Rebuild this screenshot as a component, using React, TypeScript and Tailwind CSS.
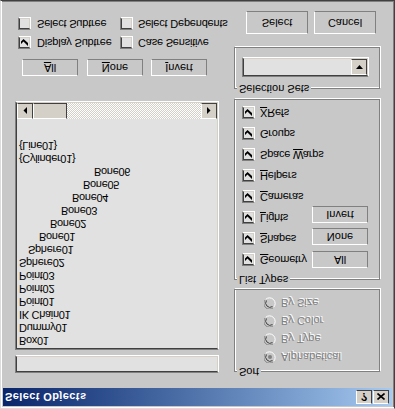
import React from "react";

const font = "font-['Liberation_Sans',Arial,sans-serif]";

const objects = [
  { name: "Box01", pl: 2 },
  { name: "Dummy01", pl: 2 },
  { name: "IK Chain01", pl: 2 },
  { name: "Point01", pl: 2 },
  { name: "Point02", pl: 2 },
  { name: "Point03", pl: 2 },
  { name: "Sphere02", pl: 2 },
  { name: "Sphere01", pl: 11 },
  { name: "Bone01", pl: 22 },
  { name: "Bone02", pl: 33 },
  { name: "Bone03", pl: 44 },
  { name: "Bone04", pl: 55 },
  { name: "Bone05", pl: 66 },
  { name: "Bone06", pl: 77 },
  { name: "{Cylinder01}", pl: 2 },
  { name: "{Line01}", pl: 2 },
];

const listTypes: { label: React.ReactNode }[] = [
  { label: <><u>G</u>eometry</> },
  { label: <><u>S</u>hapes</> },
  { label: <><u>L</u>ights</> },
  { label: <><u>C</u>ameras</> },
  { label: <><u>H</u>elpers</> },
  { label: <>Space <u>W</u>arps</> },
  { label: <>Groups</> },
  { label: <><u>X</u>Refs</> },
];

const sortOptions = ["Alphabetical", "By Type", "By Color", "By Size"];

function Raised({ children, className = "" }: { children?: React.ReactNode; className?: string }) {
  return (
    <div
      className={`flex items-center justify-center bg-[#c8c8c8] border border-t-white border-l-white border-b-[#808080] border-r-[#808080] text-[11px] leading-[13px] ${className}`}
    >
      {children}
    </div>
  );
}

function Sunken({ children, className = "", inner = "" }: { children?: React.ReactNode; className?: string; inner?: string }) {
  return (
    <div className={`border border-t-[#808080] border-l-[#808080] border-b-white border-r-white ${className}`}>
      <div className={`h-full border border-t-[#404040] border-l-[#404040] border-b-[#d4d0c8] border-r-[#d4d0c8] bg-[#e1e1e1] ${inner}`}>
        {children}
      </div>
    </div>
  );
}

function Check({ checked }: { checked?: boolean }) {
  return (
    <div className="w-[13px] h-[13px] shrink-0 border border-t-[#808080] border-l-[#808080] border-b-white border-r-white">
      <div className="w-full h-full flex items-center justify-center border border-t-[#404040] border-l-[#404040] border-b-[#d4d0c8] border-r-[#d4d0c8] bg-[#e1e1e1]">
        {checked && (
          <svg width="7" height="7" viewBox="0 0 7 7">
            <polygon points="0,2 2.5,4.5 7,0 7,3 2.5,7 0,4.5" fill="#000" />
          </svg>
        )}
      </div>
    </div>
  );
}

function Radio({ on }: { on?: boolean }) {
  return (
    <svg width="12" height="12" viewBox="0 0 12 12" className="shrink-0">
      <circle cx="6" cy="6" r="5.5" fill="#c8c8c8" />
      <path d="M1.5 9.5 A5.5 5.5 0 0 1 9.5 1.5" stroke="#808080" fill="none" />
      <path d="M9.5 1.5 A5.5 5.5 0 0 1 1.5 9.5" stroke="#fff" fill="none" />
      <path d="M2.5 8.5 A4.3 4.3 0 0 1 8.5 2.5" stroke="#404040" fill="none" />
      {on && <circle cx="6" cy="6" r="2" fill="#808080" />}
    </svg>
  );
}

function Group({ label, className = "", children }: { label: string; className?: string; children?: React.ReactNode }) {
  return (
    <div className={`relative border border-[#808080] shadow-[inset_1px_1px_0_#fff,1px_1px_0_#fff] ${className}`}>
      <span className="absolute -top-[7px] left-[2px] px-[2px] bg-[#c8c8c8] text-[11px] leading-[13px]">{label}</span>
      {children}
    </div>
  );
}

export default function App() {
  return (
    <div className={`w-[395px] h-[409px] [transform:scaleY(-1)] ${font} text-black`}>
      <div className="w-full h-full bg-[#c8c8c8] border border-t-[#dcdcdc] border-l-[#dcdcdc] border-b-[#404040] border-r-[#404040] shadow-[inset_1px_1px_0_#fff,inset_-1px_-1px_0_#808080] p-[2px] flex flex-col">
        {/* caption */}
        <div className="h-[18px] flex items-center pl-[2px] pr-[3px] bg-gradient-to-r from-[#0a246a] to-[#a6caf0]">
          <span className="text-[11px] font-bold text-white tracking-[0.4px] leading-[13px]">Select Objects</span>
          <div className="ml-auto flex gap-[1px]">
            <div className="w-[16px] h-[14px] flex items-center justify-center bg-[#d4d0c8] border border-t-white border-l-white border-b-[#404040] border-r-[#404040] text-[11px] font-bold leading-none">
              ?
            </div>
            <div className="w-[16px] h-[14px] flex items-center justify-center bg-[#d4d0c8] border border-t-white border-l-white border-b-[#404040] border-r-[#404040]">
              <svg width="8" height="7" viewBox="0 0 8 7">
                <path d="M0.5 0.5 L7.5 6.5 M7.5 0.5 L0.5 6.5" stroke="#000" strokeWidth="1.6" />
              </svg>
            </div>
          </div>
        </div>

        <div className="flex pl-[12px]">
          {/* left column */}
          <div className="w-[204px] shrink-0 mt-[15px] flex flex-col">
            <Sunken className="h-[18px]" />
            <Sunken className="mt-[5px] h-[249px]" inner="flex flex-col">
              <div className="flex-1 pt-[1px] overflow-hidden text-[11px] leading-[13px] tracking-[-0.3px]">
                {objects.map((o) => (
                  <div key={o.name} className="h-[13px] whitespace-nowrap" style={{ paddingLeft: o.pl }}>
                    {o.name}
                  </div>
                ))}
              </div>
              <div className="h-[16px] flex">
                <div className="w-[16px] h-[16px] flex items-center justify-center bg-[#d4d0c8] border border-t-white border-l-white border-b-[#404040] border-r-[#404040]">
                  <svg width="4" height="7" viewBox="0 0 4 7"><polygon points="4,0 4,7 0.5,3.5" fill="#000" /></svg>
                </div>
                <div className="w-[34px] h-[16px] bg-[#d4d0c8] border border-t-white border-l-white border-b-[#404040] border-r-[#404040]" />
                <div className="flex-1 bg-[repeating-conic-gradient(#fff_0%_25%,#d4d0c8_0%_50%)] bg-[length:2px_2px]" />
                <div className="w-[16px] h-[16px] flex items-center justify-center bg-[#d4d0c8] border border-t-white border-l-white border-b-[#404040] border-r-[#404040]">
                  <svg width="4" height="7" viewBox="0 0 4 7"><polygon points="0,0 0,7 3.5,3.5" fill="#000" /></svg>
                </div>
              </div>
            </Sunken>

            <div className="mt-[25px] flex">
              <Raised className="ml-[7px] w-[56px] h-[17px]"><u>A</u>ll</Raised>
              <Raised className="ml-[9px] w-[56px] h-[17px]"><u>N</u>one</Raised>
              <Raised className="ml-[8px] w-[56px] h-[17px]"><u>I</u>nvert</Raised>
            </div>

            <div className="mt-[10px] h-[13px] flex items-center pl-[3px] text-[11px] leading-[13px] tracking-[-0.2px] whitespace-nowrap">
              <div className="w-[102px] shrink-0 flex items-center gap-[6px]">
                <Check checked />
                <span>Display Subtree</span>
              </div>
              <div className="shrink-0 flex items-center gap-[5px]">
                <Check />
                <span>Case Sensitive</span>
              </div>
            </div>
            <div className="mt-[6px] h-[13px] flex items-center pl-[3px] text-[11px] leading-[13px] tracking-[-0.2px] whitespace-nowrap">
              <div className="w-[102px] shrink-0 flex items-center gap-[6px]">
                <Check />
                <span>Select Subtree</span>
              </div>
              <div className="shrink-0 flex items-center gap-[5px]">
                <Check />
                <span>Select Dependents</span>
              </div>
            </div>
          </div>

          {/* right column */}
          <div className="ml-[15px] w-[146px] shrink-0 mt-[16px] flex flex-col">
            <Group label="Sort" className="h-[83px]">
              <div className="pt-[5px] pl-[29px]">
                {sortOptions.map((s, i) => (
                  <div key={s} className="h-[18px] flex items-center gap-[5px]">
                    <Radio on={i === 0} />
                    <span className="text-[11px] leading-[13px] text-[#808080] [text-shadow:1px_1px_0_#fff]">{s}</span>
                  </div>
                ))}
              </div>
            </Group>

            <Group label="List Types" className="mt-[9px] h-[181px]">
              <div className="flex">
                <div className="w-[77px] shrink-0 pt-[9px] pl-[7px] text-[11px] leading-[13px] tracking-[-0.2px]">
                  {listTypes.map((t, i) => (
                    <div key={i} className="h-[21px] flex items-center gap-[5px] whitespace-nowrap">
                      <Check checked />
                      <span>{t.label}</span>
                    </div>
                  ))}
                </div>
                <div className="pt-[11px] flex flex-col gap-[5.5px]">
                  <Raised className="w-[56px] h-[17px]">All</Raised>
                  <Raised className="w-[56px] h-[17px]">None</Raised>
                  <Raised className="w-[56px] h-[17px]">Invert</Raised>
                </div>
              </div>
            </Group>

            <Group label="Selection Sets" className="mt-[10px] h-[42px]">
              <div className="pt-[11px] pl-[7px]">
                <Sunken className="w-[127px] h-[20px]" inner="flex justify-end">
                  <div className="w-[16px] h-full flex items-center justify-center bg-[#d4d0c8] border border-t-white border-l-white border-b-[#404040] border-r-[#404040]">
                    <svg width="7" height="4" viewBox="0 0 7 4"><polygon points="0,0 7,0 3.5,4" fill="#000" /></svg>
                  </div>
                </Sunken>
              </div>
            </Group>

            <div className="mt-[13px] pl-[12px] flex gap-[6px]">
              <Raised className="w-[62px] h-[23px]">Select</Raised>
              <Raised className="w-[62px] h-[23px]">Cancel</Raised>
            </div>
          </div>
        </div>
      </div>
    </div>
  );
}
